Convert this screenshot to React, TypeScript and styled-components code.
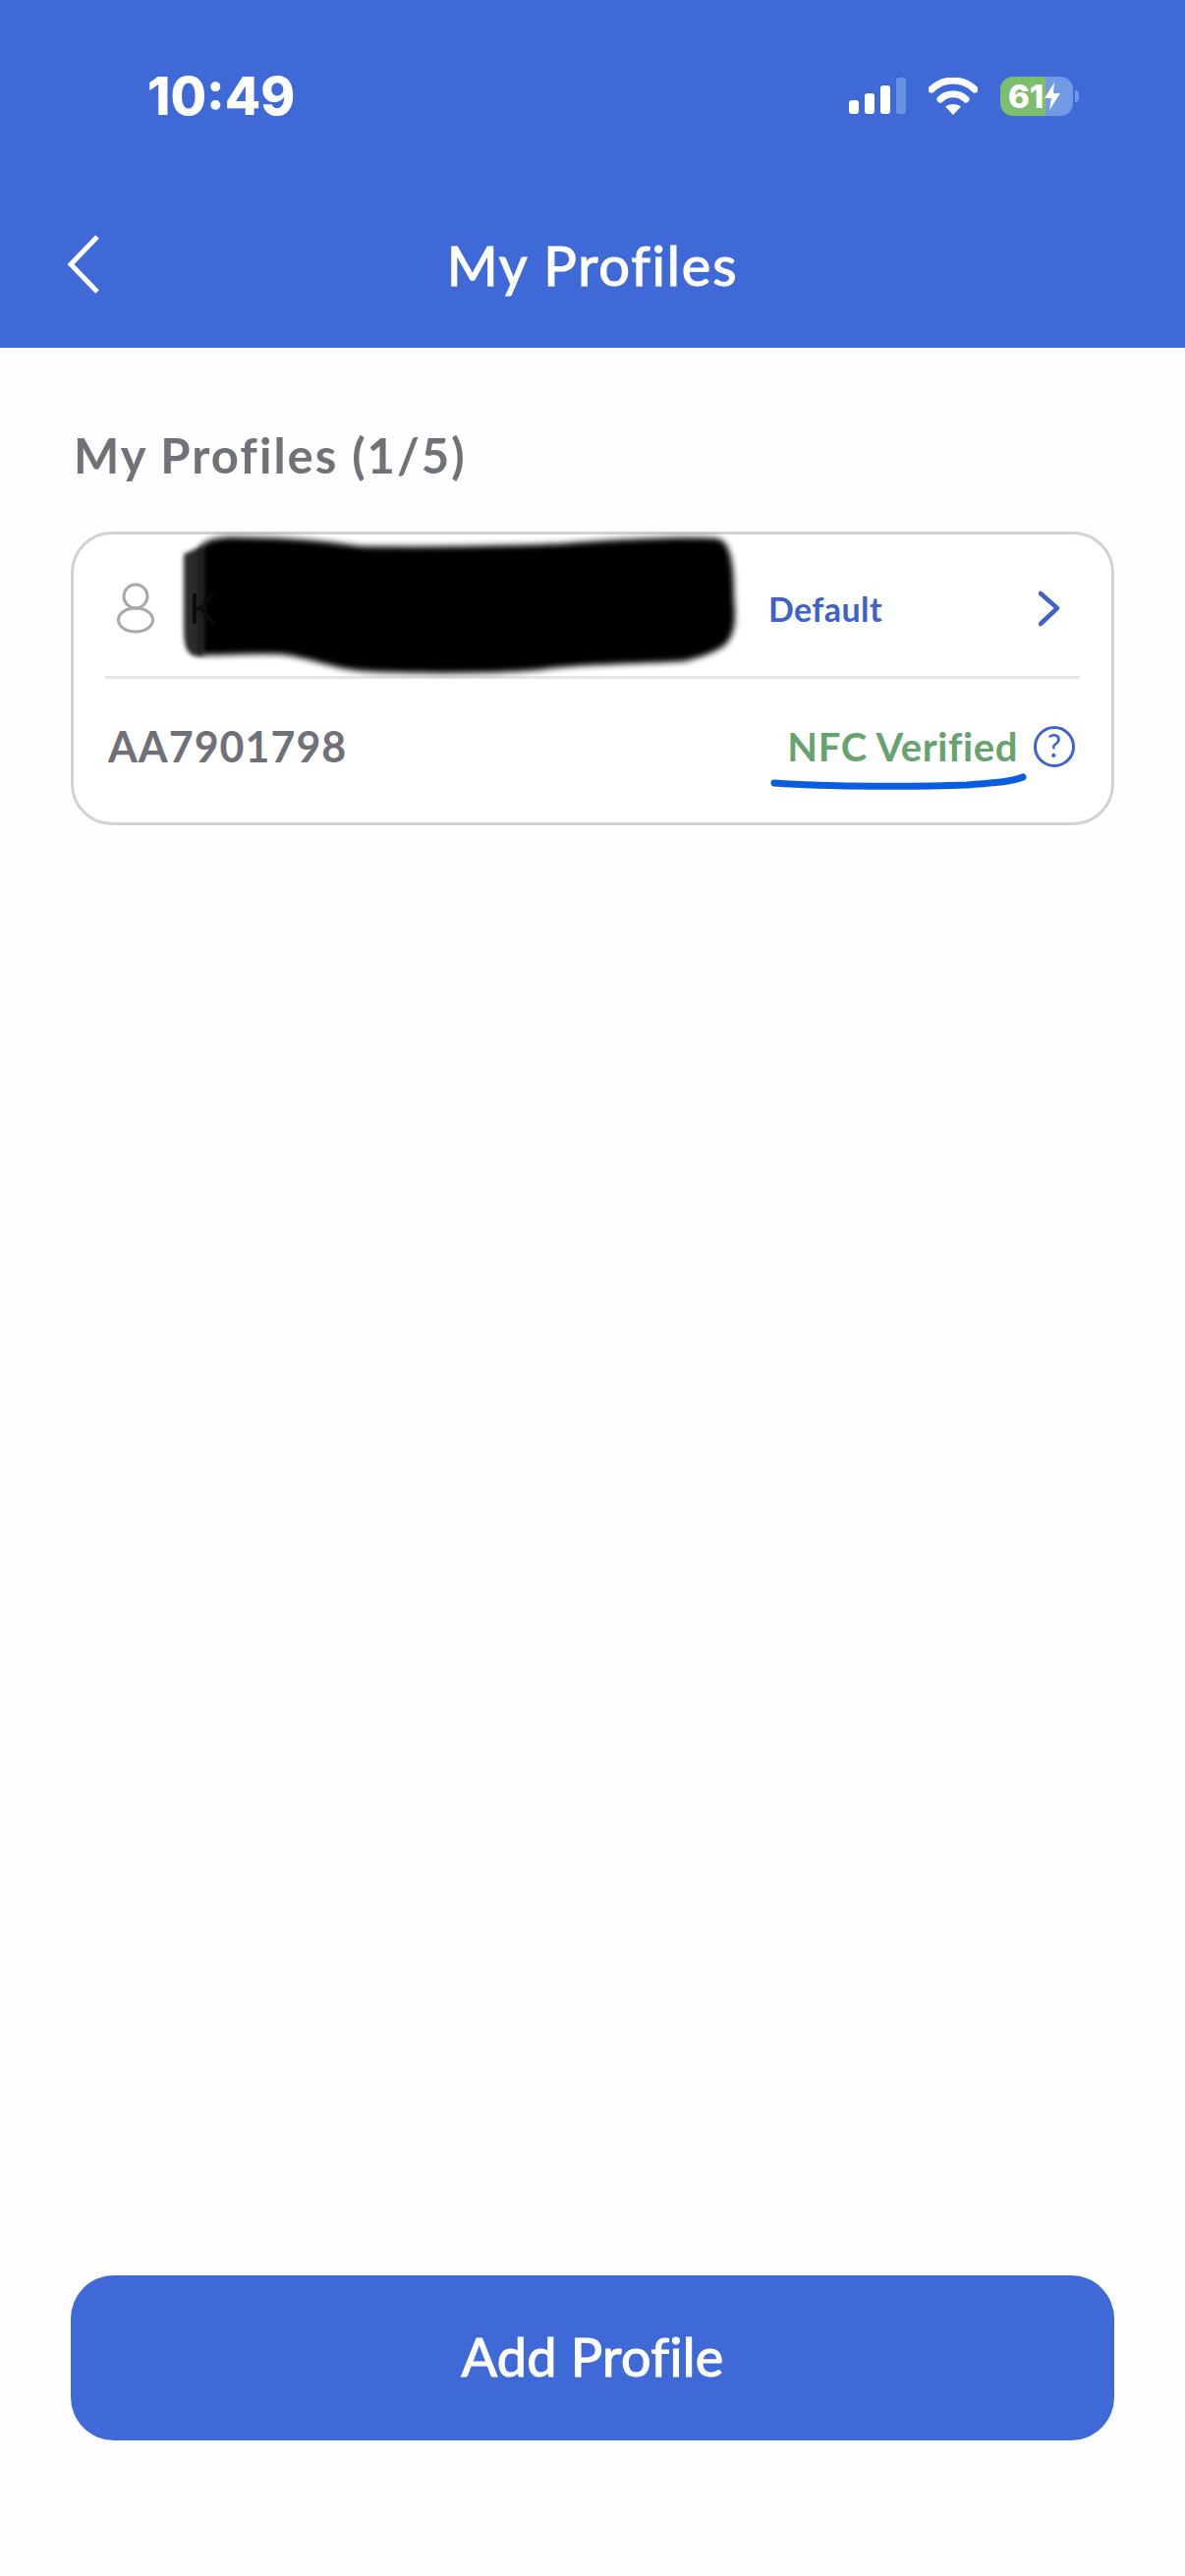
import React from 'react';
import styled, { createGlobalStyle } from 'styled-components';

const GlobalStyle = createGlobalStyle`
  html, body {
    margin: 0;
    padding: 0;
    background: #fefefe;
  }
`;

const Page = styled.div`
  display: flex;
  flex-direction: column;
  width: 1206px;
  height: 2622px;
  overflow: hidden;
  background: #fefefe;
  font-family: Lato, "Open Sans", sans-serif;
`;

const Header = styled.header`
  display: flex;
  flex-direction: column;
  height: 354px;
  background: #3e69d6;
  color: #fff;
`;

const StatusBar = styled.div`
  display: flex;
  align-items: center;
  justify-content: space-between;
  height: 196px;
  padding: 0 107px 0 150px;
`;

const Time = styled.span`
  font-family: Inter, "Liberation Sans", sans-serif;
  font-size: 53px;
  font-weight: 800;
`;

const StatusIcons = styled.div`
  display: flex;
  align-items: center;
  gap: 23px;
`;

const Battery = styled.div`
  position: relative;
  display: flex;
  align-items: center;
  width: 74px;
  height: 40px;
  margin-right: 7px;
  border-radius: 13px;
  background: linear-gradient(to right, #7cbd6e 0 62%, #7299e3 62% 100%);
`;

const BatteryLevel = styled.span`
  padding-left: 8px;
  font-family: Inter, "Liberation Sans", sans-serif;
  font-size: 33px;
  font-weight: 800;
  line-height: 40px;
`;

const BatteryNub = styled.span`
  position: absolute;
  top: 14px;
  right: -6px;
  width: 4px;
  height: 12px;
  border-radius: 0 4px 4px 0;
  background: #7299e3;
`;

const NavBar = styled.div`
  display: grid;
  grid-template-columns: 1fr auto 1fr;
  align-items: center;
  height: 146px;
  padding-left: 66px;
  padding-right: 66px;
`;

const BackIcon = styled.svg`
  display: block;
  width: 38px;
  height: 62px;
`;

const Title = styled.h1`
  margin: 0;
  font-size: 56px;
  font-weight: 400;
  letter-spacing: 1.8px;
  -webkit-text-stroke: 1.2px #fff;
`;

const Main = styled.main`
  display: flex;
  flex: 1;
  flex-direction: column;
  padding: 0 72px 138px;
`;

const SectionTitle = styled.h2`
  margin: 79px 0 0 3px;
  color: #70727a;
  font-size: 49px;
  font-weight: 700;
  letter-spacing: 2px;
  line-height: 60px;
`;

const Card = styled.section`
  box-sizing: border-box;
  margin-top: 48px;
  height: 299px;
  border: 3px solid #d2d2d4;
  border-radius: 42px;
  background: #fff;
`;

const Row = styled.div<{ $divider?: boolean }>`
  position: relative;
  box-sizing: border-box;
  display: flex;
  align-items: center;
  height: 147px;
  margin: 0 32px;
  padding: ${(p) => (p.$divider ? '6px 0 0' : '0 0 10px')};
  border-bottom: ${(p) => (p.$divider ? '3px solid #e6e6e8' : 'none')};
`;

const UserIcon = styled.svg`
  width: 40px;
  height: 52px;
  margin-left: 11px;
  flex-shrink: 0;
`;

const Name = styled.span`
  position: relative;
  z-index: 1;
  margin-left: 34px;
  color: #0b0b0b;
  font-size: 42px;
`;

const Redaction = styled.svg`
  position: absolute;
  top: -4px;
  left: 70px;
  width: 590px;
  height: 156px;
`;

const DefaultLabel = styled.span`
  position: absolute;
  left: 675px;
  color: #3f61c9;
  font-size: 34px;
  font-weight: 700;
  letter-spacing: 0.4px;
`;

const Chevron = styled.svg`
  width: 28px;
  height: 40px;
  margin-left: auto;
  margin-right: 17px;
`;

const PassportNumber = styled.span`
  margin-left: 3px;
  color: #6f7078;
  font-size: 43px;
  font-weight: 700;
  letter-spacing: 1px;
`;

const Verified = styled.span`
  margin-left: auto;
  color: #67a36f;
  font-size: 40px;
  font-weight: 700;
  letter-spacing: 0.6px;
`;

const Underline = styled.svg`
  position: absolute;
  top: 91px;
  left: 677px;
  width: 262px;
  height: 24px;
`;

const HelpIcon = styled.svg`
  width: 44px;
  height: 44px;
  margin: 0 4px 0 15px;
  flex-shrink: 0;
`;

const HelpMark = styled.text`
  fill: #3f61c9;
  font-family: Lato, sans-serif;
  font-size: 32px;
  font-weight: 400;
`;

const AddButton = styled.button`
  height: 168px;
  margin-top: auto;
  padding-bottom: 4px;
  border: 0;
  border-radius: 44px;
  background: #3e69d6;
  color: #fff;
  font-family: inherit;
  font-size: 54px;
  font-weight: 400;
  letter-spacing: 0.3px;
  -webkit-text-stroke: 1.2px #fff;
`;

const App = (): JSX.Element => (
  <Page>
    <GlobalStyle />
    <Header>
      <StatusBar>
        <Time>10:49</Time>
        <StatusIcons>
          <svg width="58" height="38" viewBox="0 0 58 38">
            <rect x="0" y="23" width="10" height="14" rx="3" fill="#fff" />
            <rect x="16" y="16" width="10" height="21" rx="3" fill="#fff" />
            <rect x="32" y="8" width="10" height="29" rx="3" fill="#fff" />
            <rect x="48" y="0" width="10" height="37" rx="3" fill="#6a90e4" />
          </svg>
          <svg width="50" height="38" viewBox="0 0 50 38">
            <path d="M3 12C15 0 35 0 47 12" fill="none" stroke="#fff" strokeWidth="7" strokeLinecap="round" />
            <path d="M12 22C19 15 31 15 38 22" fill="none" stroke="#fff" strokeWidth="7" strokeLinecap="round" />
            <path d="M17 29.5C21 26 29 26 33 29.5L25 38Z" fill="#fff" />
          </svg>
          <Battery>
            <BatteryLevel>61</BatteryLevel>
            <svg width="18" height="28" viewBox="0 0 18 28">
              <path d="M11 0L1 16H8L6 28L17 11H10Z" fill="#fff" />
            </svg>
            <BatteryNub />
          </Battery>
        </StatusIcons>
      </StatusBar>
      <NavBar>
        <BackIcon viewBox="0 0 38 62">
          <path d="M33 3L6 31L33 59" fill="none" stroke="#fff" strokeWidth="5" />
        </BackIcon>
        <Title>My Profiles</Title>
      </NavBar>
    </Header>
    <Main>
      <SectionTitle>My Profiles (1/5)</SectionTitle>
      <Card>
        <Row $divider>
          <UserIcon viewBox="0 0 40 52">
            <circle cx="20" cy="14" r="12" fill="none" stroke="#a6a8ad" strokeWidth="3" />
            <ellipse cx="20" cy="38" rx="17.5" ry="12" fill="none" stroke="#a6a8ad" strokeWidth="3" />
          </UserIcon>
          <Redaction viewBox="0 0 590 156">
            <path d="M10 24L30 15V128H22C12 126 10 115 10 100Z" fill="#2c2c2c" style={{ filter: 'blur(2px)' }} />
            <path
              d="M27 16C34 8 50 6 70 7C110 7 150 10 190 16C250 17 340 16 400 13C450 9 520 6 552 8C566 10 570 30 570 70C573 95 570 115 552 122C540 128 530 130 520 133C470 136 410 136 370 142C320 146 240 146 190 143C160 140 140 130 110 126C80 125 50 127 27 127Z"
              fill="#000"
              style={{ filter: 'blur(3px)' }}
            />
          </Redaction>
          <Name>K</Name>
          <DefaultLabel>Default</DefaultLabel>
          <Chevron viewBox="0 0 28 40">
            <path d="M5 5L22 20L5 36" fill="none" stroke="#3f61c9" strokeWidth="4.5" strokeLinecap="round" strokeLinejoin="round" />
          </Chevron>
        </Row>
        <Row>
          <PassportNumber>AA7901798</PassportNumber>
          <Verified>NFC Verified</Verified>
          <HelpIcon viewBox="0 0 44 44">
            <circle cx="22" cy="22" r="19.5" fill="none" stroke="#3f61c9" strokeWidth="3" />
            <HelpMark x="22" y="33" textAnchor="middle">?</HelpMark>
          </HelpIcon>
          <Underline viewBox="0 0 262 24">
            <path d="M4 15C60 19 150 19 200 17C225 15 245 14 257 9" fill="none" stroke="#0a5ce0" strokeWidth="7" strokeLinecap="round" />
          </Underline>
        </Row>
      </Card>
      <AddButton>Add Profile</AddButton>
    </Main>
  </Page>
);

export default App;
